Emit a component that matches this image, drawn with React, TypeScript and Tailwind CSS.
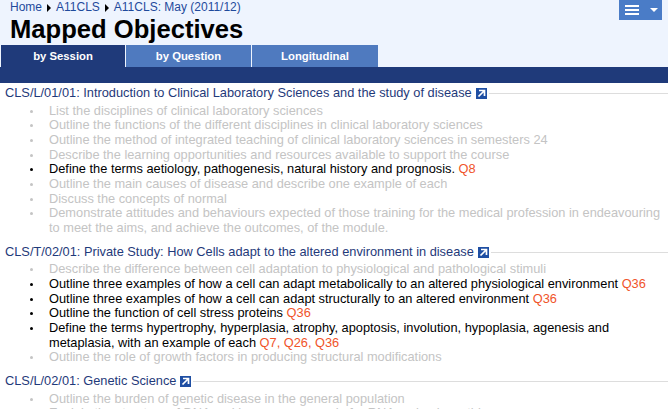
const sessions = [
  {
    title: "CLS/L/01/01: Introduction to Clinical Laboratory Sciences and the study of disease",
    items: [
      { text: "List the disciplines of clinical laboratory sciences" },
      { text: "Outline the functions of the different disciplines in clinical laboratory sciences" },
      { text: "Outline the method of integrated teaching of clinical laboratory sciences in semesters 24" },
      { text: "Describe the learning opportunities and resources available to support the course" },
      { text: "Define the terms aetiology, pathogenesis, natural history and prognosis.", q: "Q8" },
      { text: "Outline the main causes of disease and describe one example of each" },
      { text: "Discuss the concepts of normal" },
      { text: "Demonstrate attitudes and behaviours expected of those training for the medical profession in endeavouring to meet the aims, and achieve the outcomes, of the module." },
    ],
  },
  {
    title: "CLS/T/02/01: Private Study: How Cells adapt to the altered environment in disease",
    items: [
      { text: "Describe the difference between cell adaptation to physiological and pathological stimuli" },
      { text: "Outline three examples of how a cell can adapt metabolically to an altered physiological environment", q: "Q36" },
      { text: "Outline three examples of how a cell can adapt structurally to an altered environment", q: "Q36" },
      { text: "Outline the function of cell stress proteins", q: "Q36" },
      { text: "Define the terms hypertrophy, hyperplasia, atrophy, apoptosis, involution, hypoplasia, agenesis and metaplasia, with an example of each", q: "Q7, Q26, Q36" },
      { text: "Outline the role of growth factors in producing structural modifications" },
    ],
  },
  {
    title: "CLS/L/02/01: Genetic Science",
    items: [
      { text: "Outline the burden of genetic disease in the general population" },
      { text: "Explain the structure of DNA and how genes encode for RNA and polypeptides" },
    ],
  },
];

function LinkIcon() {
  return (
    <svg width="11" height="11" viewBox="0 0 11 11" className="ml-[4px] shrink-0">
      <rect width="11" height="11" fill="#1f4fa3" />
      <path d="M3 2.5h5.5V8M8 3L2.5 8.5" fill="none" stroke="#fff" strokeWidth="1.7" />
    </svg>
  );
}

export default function App() {
  return (
    <div className="h-[409px] w-[668px] overflow-hidden bg-white font-['Liberation_Sans',sans-serif] text-[12.8px] leading-[14.67px]">
      {/* Header */}
      <div className="relative h-[45px] bg-[#eef4fe] pl-[10px]">
        <div className="flex h-[15px] items-center text-[12px] text-[#1f4a9c]">
          <span>Home</span>
          <span className="mx-[5px] h-0 w-0 border-y-[4px] border-l-[4px] border-y-transparent border-l-black" />
          <span>A11CLS</span>
          <span className="mx-[5px] h-0 w-0 border-y-[4px] border-l-[4px] border-y-transparent border-l-black" />
          <span>A11CLS: May (2011/12)</span>
        </div>
        <h1 className="text-[25.6px] font-bold leading-[28px] text-black">Mapped Objectives</h1>
        <div className="absolute right-[6px] top-0 flex h-[20px] w-[43px] items-center bg-[#4a7cc7] pl-[6px]">
          <div className="flex w-[14px] flex-col gap-[2px]">
            <div className="h-[2px] bg-white" />
            <div className="h-[2px] bg-white" />
            <div className="h-[2px] bg-white" />
          </div>
          <span className="ml-[11px] h-0 w-0 border-x-[4px] border-t-[4px] border-x-transparent border-t-white" />
        </div>
      </div>

      {/* Tabs */}
      <div className="flex h-[22px] gap-[1px] bg-[#eef4fe] pl-[1px] text-[11.3px] font-bold text-white">
        <div className="flex w-[124px] justify-center bg-[#1f3a7a] pt-[4px]">by Session</div>
        <div className="flex w-[125px] justify-center bg-[#4f7abf] pt-[4px]">by Question</div>
        <div className="flex w-[126px] justify-center bg-[#4f7abf] pt-[4px]">Longitudinal</div>
      </div>
      <div className="h-[16px] bg-[#1f3a7a]" />

      {/* Sessions */}
      <div className="pt-[3px]">
        {sessions.map((s) => (
          <div key={s.title} className="mb-[9px]">
            <div className="flex items-center pl-[5px] text-[#1f3a7a]">
              <span className="whitespace-nowrap">{s.title}</span>
              <LinkIcon />
              <div className="ml-[2px] h-px flex-1 bg-[#dddddd]" />
            </div>
            <ul className="mt-[3px] pl-[49px] pr-[4px]">
              {s.items.map((item) => (
                <li key={item.text} className={item.q ? "relative text-black" : "relative text-[#c4c4c4]"}>
                  <span
                    className={
                      item.q
                        ? "absolute left-[-19px] top-[6px] h-[3px] w-[3px] rounded-full bg-black"
                        : "absolute left-[-19px] top-[6px] h-[3px] w-[3px] rounded-full bg-[#c4c4c4]"
                    }
                  />
                  {item.text}
                  {item.q && <span className="text-[#f0542a]"> {item.q}</span>}
                </li>
              ))}
            </ul>
          </div>
        ))}
      </div>
    </div>
  );
}
